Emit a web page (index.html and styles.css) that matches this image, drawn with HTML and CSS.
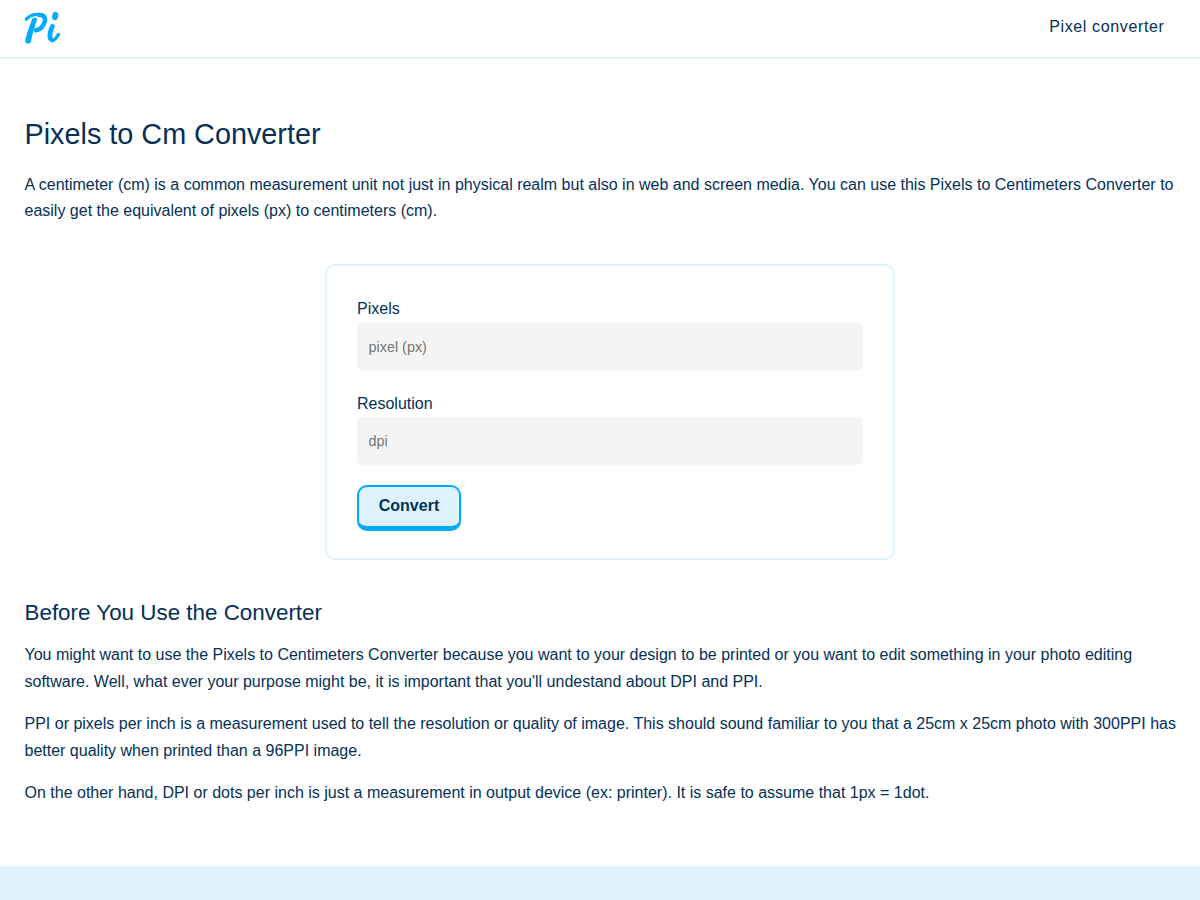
FILE: index.html
```html
<!DOCTYPE html>
<html lang="en">
<head>
<meta charset="utf-8">
<title>Pixels to Cm Converter</title>
<link rel="stylesheet" href="styles.css">
</head>
<body>
<header class="header">
  <a class="logo" aria-label="Pi">
    <svg width="38" height="36" viewBox="0 0 38 36" fill="none" stroke="#00aaff" stroke-linecap="round" stroke-linejoin="round">
      <path stroke-width="1.200" fill="#00aaff" d="M8.500 9.500C9 8 12.700 7.500 12.300 9.500C10.500 16 7.500 24 6.300 31.500C5.700 33.600 2 33.600 1.900 31.500C2 25 6.500 17 8.500 9.500Z"/>
      <path stroke-width="3.200" d="M2.300 9.300C5 5.500 11 4.200 16 4.400"/>
      <path stroke-width="4.400" d="M15 5C21.500 4.600 22.200 9.500 20 13.500C18.200 17.500 15 20 12 20.300"/>
      <path stroke-width="4.800" d="M28.300 16.400C26.300 21 25.300 25 26.200 28.200"/>
      <path stroke-width="3.400" d="M26.200 28.600C27.500 32.200 31.500 30.300 34.400 24.500"/>
      <ellipse cx="31.200" cy="6" rx="3" ry="4.200" stroke="none" fill="#00aaff" transform="rotate(14 31.200 6)"/>
    </svg>
  </a>
  <nav class="nav"><a class="nav-link">Pixel converter</a></nav>
</header>
<main class="main">
  <h1 class="title">Pixels to Cm Converter</h1>
  <p class="text">A centimeter (cm) is a common measurement unit not just in physical realm but also in web and screen media. You can use this Pixels to Centimeters Converter to easily get the equivalent of pixels (px) to centimeters (cm).</p>
  <form class="converter">
    <label class="label" for="px">Pixels</label>
    <input class="input" id="px" type="text" placeholder="pixel (px)">
    <label class="label" for="dpi">Resolution</label>
    <input class="input input-resolution" id="dpi" type="text" placeholder="dpi">
    <button class="button" type="button">Convert</button>
  </form>
  <section class="notes">
    <h2 class="subtitle">Before You Use the Converter</h2>
    <p class="text">You might want to use the Pixels to Centimeters Converter because you want to your design to be printed or you want to edit something in your photo editing software. Well, what ever your purpose might be, it is important that you'll undestand about DPI and PPI.</p>
    <p class="text">PPI or pixels per inch is a measurement used to tell the resolution or quality of image. This should sound familiar to you that a 25cm x 25cm photo with 300PPI has better quality when printed than a 96PPI image.</p>
    <p class="text">On the other hand, DPI or dots per inch is just a measurement in output device (ex: printer). It is safe to assume that 1px = 1dot.</p>
  </section>
</main>
<footer class="footer"></footer>
</body>
</html>
```
FILE: styles.css
```css
* { box-sizing: border-box; }
html { background: #fff; }
body {
  margin: 0;
  height: 900px;
  overflow: hidden;
  display: flex;
  flex-direction: column;
  font-family: "Liberation Sans", Arial, sans-serif;
  font-size: 16px;
  line-height: 26.4px;
  color: #053058;
}
.header {
  height: 59px;
  flex: none;
  display: flex;
  justify-content: space-between;
  align-items: flex-start;
  padding: 10px 35.5px 0 24px;
  border-bottom: 2px solid #dff3ff;
}
.logo, .logo svg { display: block; }
.nav { padding-top: 4px; letter-spacing: 0.63px; }
.main { height: 807px; flex: none; padding: 58px 4px 0 24.5px; }
.title { margin: 0 0 20.6px; font-size: 28.8px; line-height: 34px; font-weight: 400; }
.text { margin: 0 0 16px; padding-right: 18px; }
.converter {
  width: 570px;
  height: 296px;
  margin: 39.6px 0 40px 300.5px;
  padding: 29px 30px 0;
  border: 2px solid #dff3ff;
  border-radius: 10px;
}
.label { display: block; line-height: 27px; }
.input {
  display: block;
  width: 100%;
  height: 48px;
  margin: 1px 0 19px;
  padding: 0 11.5px;
  border: 0;
  border-radius: 6px;
  background: #f4f4f4;
  font: 14.4px "Liberation Sans", Arial, sans-serif;
}
.input-resolution { margin-top: 0; }
.input::placeholder { color: #757575; }
.button {
  display: block;
  width: 104px;
  height: 46px;
  margin-top: 20px;
  padding: 0 0 1px;
  border: 2px solid #00aaff;
  border-bottom-width: 5px;
  border-radius: 10px;
  background: #dff3ff;
  color: #053058;
  font: bold 16px "Liberation Sans", Arial, sans-serif;
}
.subtitle { margin: 0 0 15px; font-size: 22.4px; line-height: 26px; font-weight: 400; }
.notes .text { margin-bottom: 15px; line-height: 27px; }
.footer { flex: 1; background: #dff3ff; }
```
